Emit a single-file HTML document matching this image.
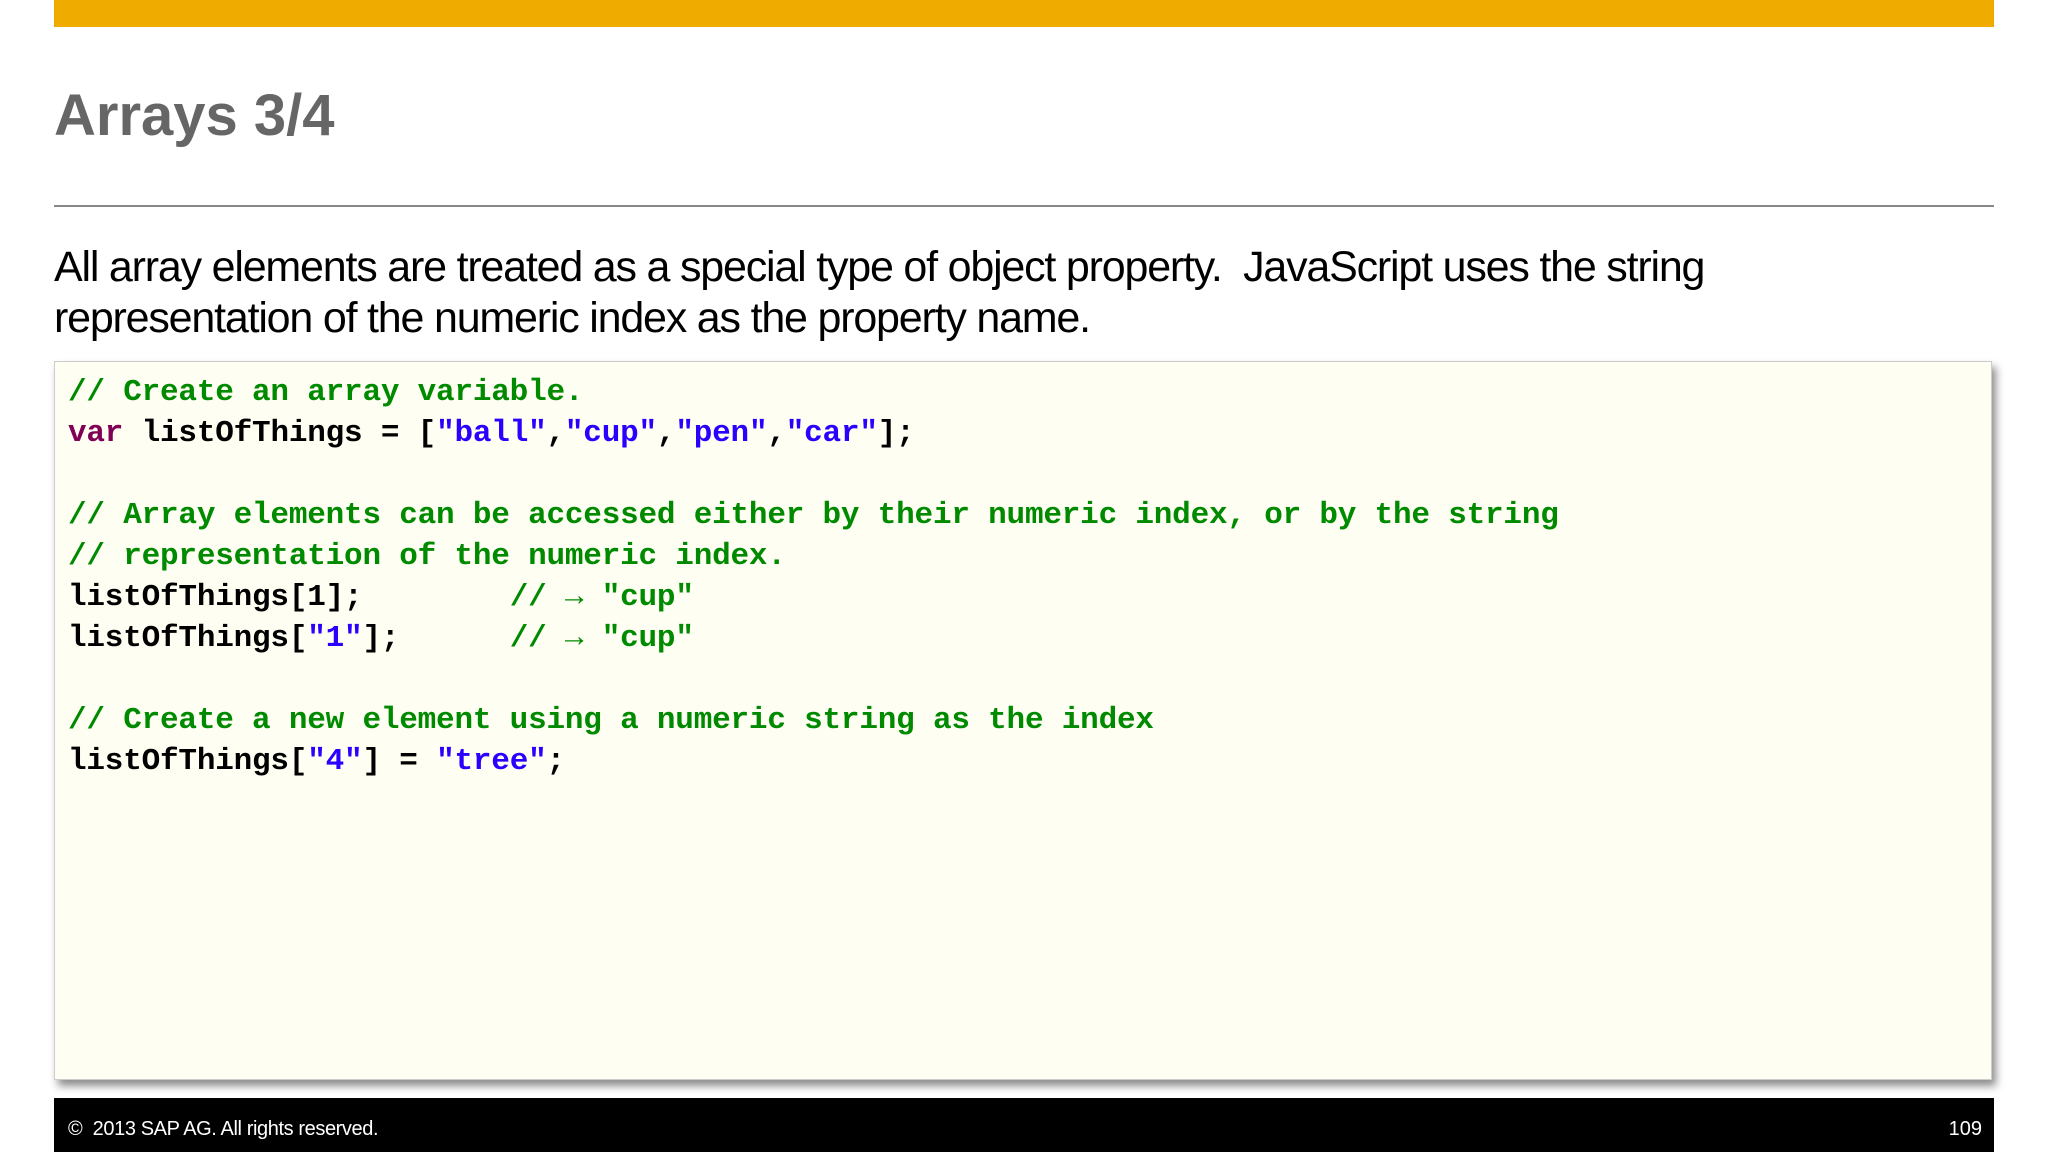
<!DOCTYPE html>
<html><head><meta charset="utf-8"><style>
*{margin:0;padding:0;box-sizing:border-box}
body{width:2048px;height:1152px;background:#fff;position:relative;overflow:hidden;font-family:"Liberation Sans",Arial,sans-serif}
.bar{position:absolute;left:54px;top:0;width:1940px;height:27px;background:#f0ab00}
.title{position:absolute;left:54px;top:82px;font-size:58px;font-weight:bold;color:#666;white-space:nowrap}
.rule{position:absolute;left:54px;top:205px;width:1940px;height:2px;background:#888}
.body{position:absolute;left:54px;top:242px;font-size:43px;line-height:51px;color:#000;white-space:nowrap;letter-spacing:-1.2px}
.code{position:absolute;left:54px;top:361px;width:1938px;height:719px;background:#fefef2;border:1px solid #ccc;box-shadow:4px 6px 8px rgba(0,0,0,.45);padding:10px 0 0 13px}
pre{font-family:"Liberation Mono","DejaVu Sans Mono",monospace;font-weight:bold;font-size:31px;line-height:41px;color:#000;letter-spacing:-0.2px}
.c{color:#008a00}.s{color:#2a00ff}.k{color:#7f0055}
.foot{position:absolute;left:54px;top:1098px;width:1940px;height:54px;background:#000;color:#fff;font-size:20px}
.foot .l{position:absolute;left:14px;top:20px;letter-spacing:-0.4px}
.foot .r{position:absolute;right:12px;top:20px}
</style></head><body>
<div class="bar"></div>
<div class="title">Arrays 3/4</div>
<div class="rule"></div>
<div class="body">All array elements are treated as a special type of object property.&nbsp; JavaScript uses the string<br>representation of the numeric index as the property name.</div>
<div class="code"><pre><span class="c">// Create an array variable.</span>
<span class="k">var</span> listOfThings = [<span class="s">"ball"</span>,<span class="s">"cup"</span>,<span class="s">"pen"</span>,<span class="s">"car"</span>];

<span class="c">// Array elements can be accessed either by their numeric index, or by the string</span>
<span class="c">// representation of the numeric index.</span>
listOfThings[1];        <span class="c">// → "cup"</span>
listOfThings[<span class="s">"1"</span>];      <span class="c">// → "cup"</span>

<span class="c">// Create a new element using a numeric string as the index</span>
listOfThings[<span class="s">"4"</span>] = <span class="s">"tree"</span>;</pre></div>
<div class="foot"><span class="l">© &nbsp;2013 SAP AG. All rights reserved.</span><span class="r">109</span></div>
</body></html>
